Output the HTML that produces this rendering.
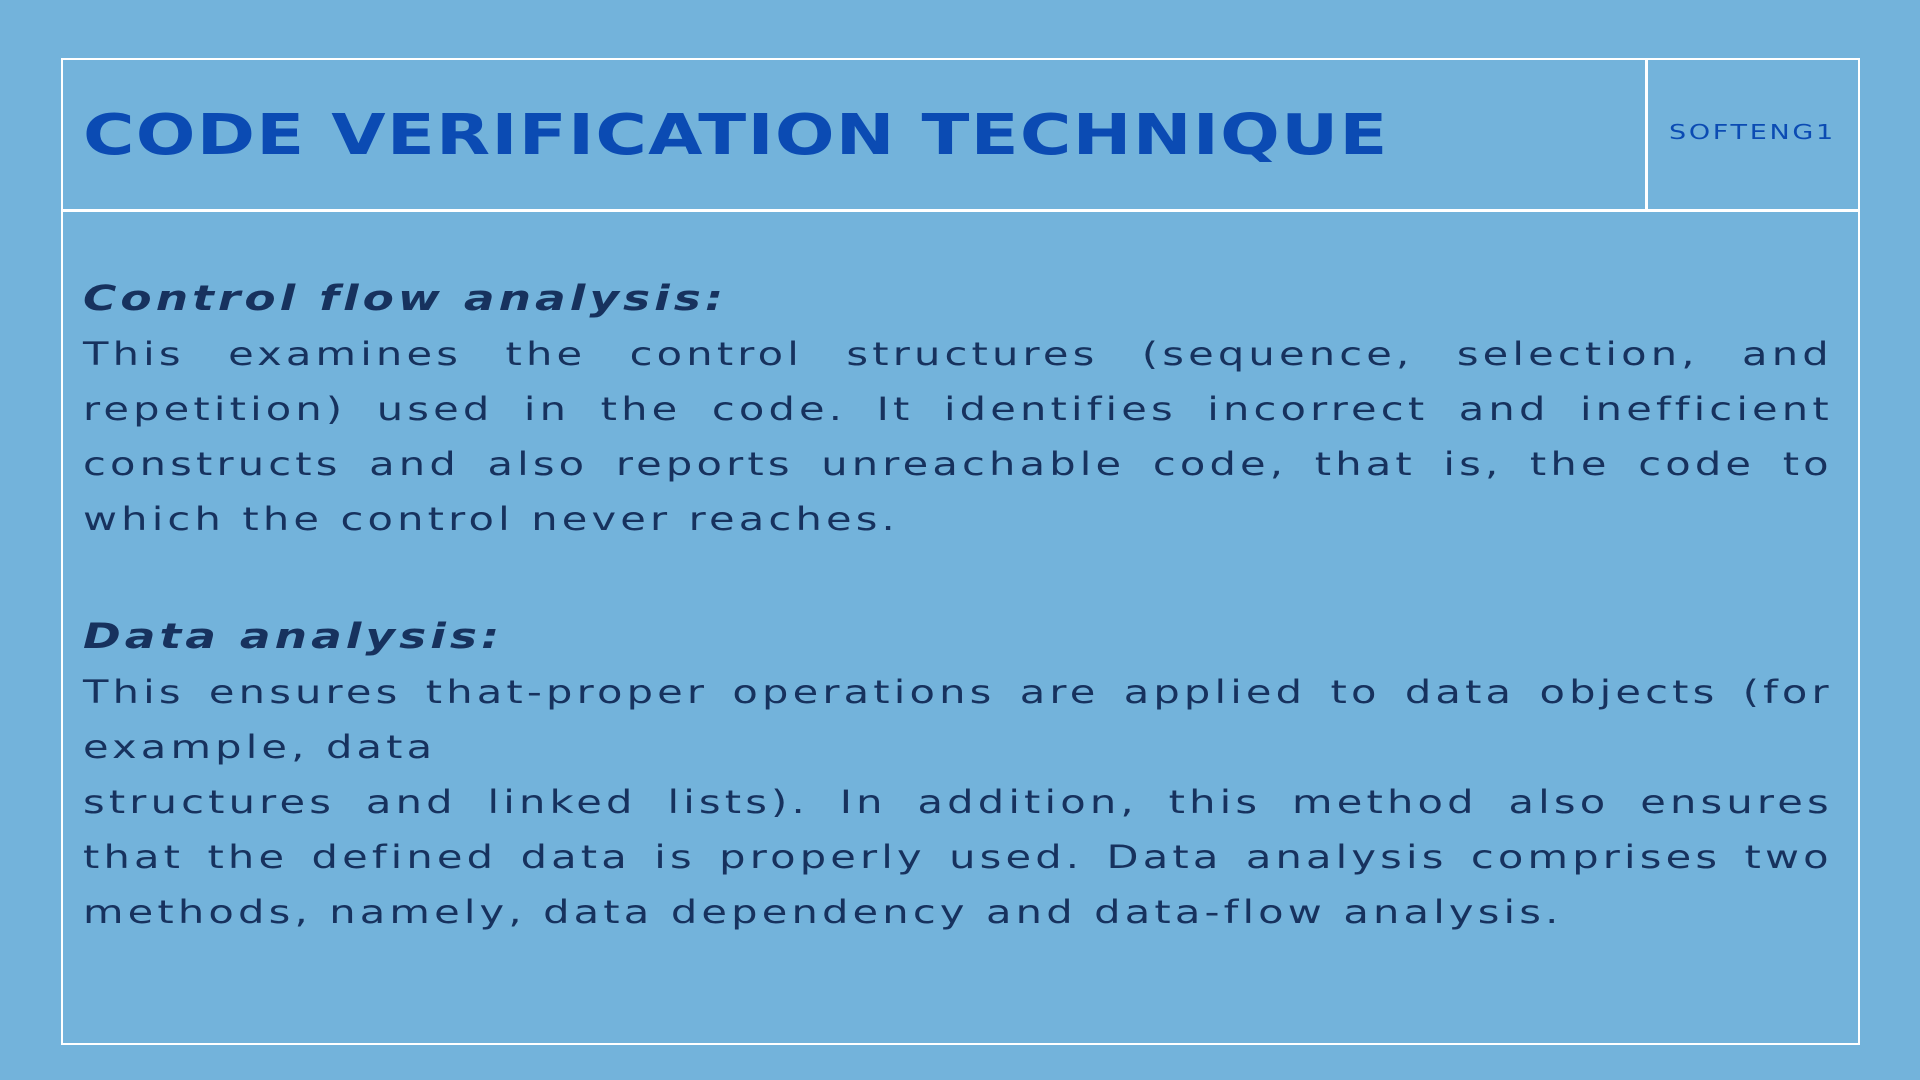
<!DOCTYPE html>
<html><head><meta charset="utf-8"><style>
body{margin:0;width:1920px;height:1080px;background:#73b3db;position:relative;overflow:hidden;font-family:"DejaVu Sans","Liberation Sans",sans-serif;}
.box{position:absolute;left:61px;top:58px;width:1795px;height:983px;border:2px solid #fff;}
.hline{position:absolute;left:61px;top:209px;width:1797px;height:3px;background:#fff;}
.vline{position:absolute;left:1645px;top:58px;width:3px;height:153px;background:#fff;}
.title{position:absolute;left:83px;top:106px;font-size:56px;font-weight:bold;color:#0b4bb3;letter-spacing:1px;white-space:nowrap;line-height:60px;transform:scaleX(1.254);transform-origin:left;}
.tag{position:absolute;left:1669px;top:120px;font-size:20px;color:#0b4bb3;letter-spacing:2px;transform:scaleX(1.35);transform-origin:left;white-space:nowrap;}
.content{position:absolute;left:83px;width:1346px;color:#17325e;font-size:32px;letter-spacing:3.2px;transform:scaleX(1.3);transform-origin:left top;}
.h{font-weight:bold;font-style:italic;font-size:35px;letter-spacing:3.1px;height:55px;line-height:55px;}
.l{height:55px;line-height:55px;white-space:nowrap;}
.j{text-align:justify;text-align-last:justify;}
</style></head><body>
<div class="box"></div><div class="hline"></div><div class="vline"></div>
<div class="title">CODE VERIFICATION TECHNIQUE</div>
<div class="tag">SOFTENG1</div>
<div class="content" style="top:272px">
<div class="h">Control flow analysis:</div>
<div class="l j">This examines the control structures (sequence, selection, and</div>
<div class="l j">repetition) used in the code. It identifies incorrect and inefficient</div>
<div class="l j">constructs and also reports unreachable code, that is, the code to</div>
<div class="l">which the control never reaches.</div>
</div>
<div class="content" style="top:610px">
<div class="h">Data analysis:</div>
<div class="l j">This ensures that-proper operations are applied to data objects (for</div>
<div class="l">example, data</div>
<div class="l j">structures and linked lists). In addition, this method also ensures</div>
<div class="l j">that the defined data is properly used. Data analysis comprises two</div>
<div class="l">methods, namely, data dependency and data-flow analysis.</div>
</div>
</body></html>
